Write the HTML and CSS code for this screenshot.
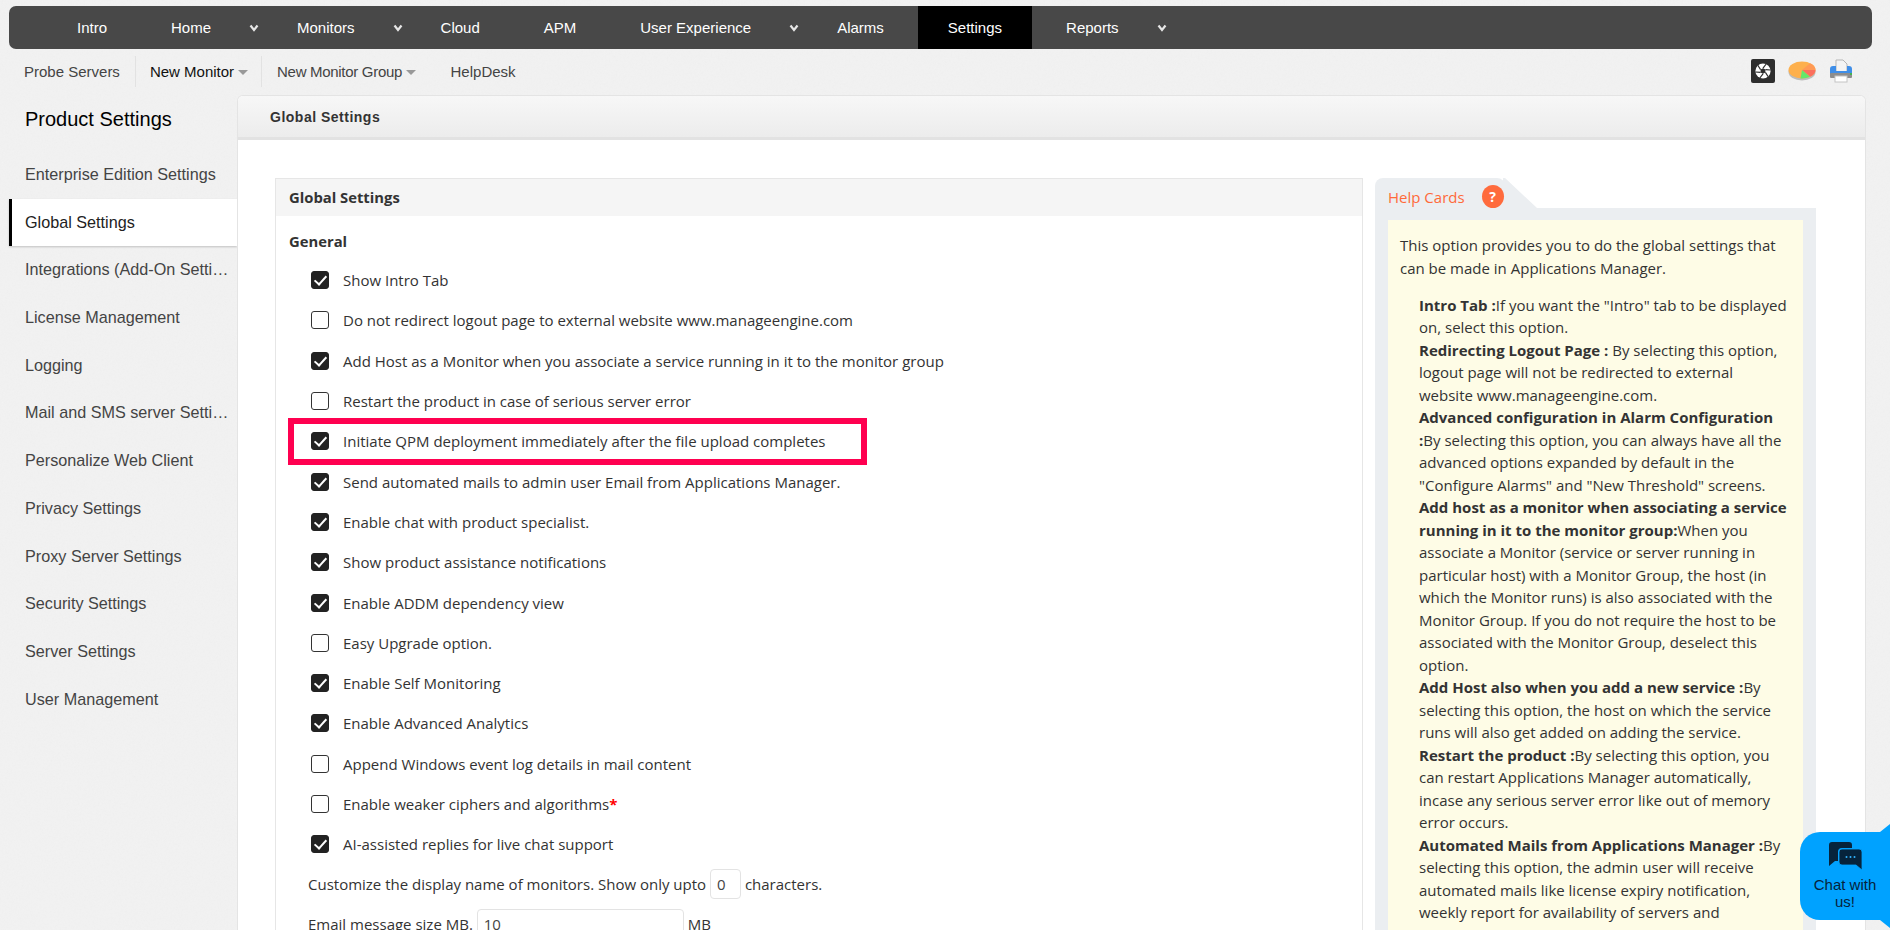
FILE: index.html
```html
<!DOCTYPE html>
<html lang="en">
<head>
<meta charset="utf-8">
<title>Global Settings</title>
<link rel="stylesheet" href="styles.css">
</head>
<body>
<nav class="topnav">
  <a class="tn">Intro</a>
  <a class="tn">Home</a><svg class="chev" viewBox="0 0 10 8"><path d="M1.5 1.5 5 6 8.5 1.5"/></svg>
  <a class="tn">Monitors</a><svg class="chev" viewBox="0 0 10 8"><path d="M1.5 1.5 5 6 8.5 1.5"/></svg>
  <a class="tn">Cloud</a>
  <a class="tn">APM</a>
  <a class="tn">User Experience</a><svg class="chev" viewBox="0 0 10 8"><path d="M1.5 1.5 5 6 8.5 1.5"/></svg>
  <a class="tn">Alarms</a>
  <a class="tn active">Settings</a>
  <a class="tn">Reports</a><svg class="chev" viewBox="0 0 10 8"><path d="M1.5 1.5 5 6 8.5 1.5"/></svg>
</nav>
<div class="subnav">
  <a class="sn first">Probe Servers</a>
  <a class="sn dark sep nm">New Monitor<i class="tri"></i></a>
  <a class="sn sep group">New Monitor Group<i class="tri"></i></a>
  <a class="sn">HelpDesk</a>
  <div class="tools">
    <svg class="ic-shutter" viewBox="0 0 24 24">
      <rect width="24" height="24" rx="2" fill="#2e2e2e"/>
      <circle cx="12" cy="12" r="7.6" fill="#fff"/>
      <path d="M12 9.2 14.4 10.6V13.4L12 14.8 9.6 13.4V10.6Z" fill="#2e2e2e"/>
      <path d="M12 9.2 15.2 5M14.4 10.6 19.6 11M14.4 13.4 17.2 17.8M12 14.8 8.8 19M9.6 13.4 4.4 13M9.6 10.6 6.8 6.2" stroke="#2e2e2e" stroke-width="1.2"/>
    </svg>
    <svg class="ic-pie" viewBox="0 0 28 20">
      <ellipse cx="14" cy="11" rx="13.5" ry="8.5" fill="#bcbcbc"/>
      <ellipse cx="14" cy="9" rx="13.5" ry="8.5" fill="#fdb04d"/>
      <path d="M14 9 27.5 9A13.5 8.5 0 0 0 22 2.2Z" fill="#ff9a55"/>
      <path d="M14 9 27.5 9A13.5 8.5 0 0 1 22 15.8Z" fill="#fb6f5e"/>
      <path d="M14 9 22 15.8A13.5 8.5 0 0 1 12.5 17.4Z" fill="#63e86a"/>
    </svg>
    <svg class="ic-print" viewBox="0 0 24 24">
      <path d="M7 1h7l4 4v9H7z" fill="#f4f4f4" stroke="#b5b5b5"/>
      <path d="M1 10c0-2 1-3 3-3h3v5h11V7h2c2 0 3 1 3 3v6H1z" fill="#3f8ee8"/>
      <rect x="1" y="14" width="22" height="5" rx="1" fill="#8d8d8d"/>
      <rect x="21" y="14" width="2" height="2" fill="#45b24d"/>
      <rect x="6" y="17" width="12" height="6" fill="#fff" stroke="#c4c4c4"/>
    </svg>
  </div>
</div>
<div class="main">
  <aside class="side">
    <h2 class="side-title">Product Settings</h2>
    <a class="si">Enterprise Edition Settings</a>
    <a class="si on">Global Settings</a>
    <a class="si">Integrations (Add-On Settings)</a>
    <a class="si">License Management</a>
    <a class="si">Logging</a>
    <a class="si">Mail and SMS server Settings</a>
    <a class="si">Personalize Web Client</a>
    <a class="si">Privacy Settings</a>
    <a class="si">Proxy Server Settings</a>
    <a class="si">Security Settings</a>
    <a class="si">Server Settings</a>
    <a class="si">User Management</a>
  </aside>
  <section class="panel">
    <header class="panel-head">Global Settings</header>
    <div class="panel-body">
      <div class="box">
        <div class="box-head">Global Settings</div>
        <div class="general">General</div>
        <label class="row"><input type="checkbox" checked>Show Intro Tab</label>
        <label class="row"><input type="checkbox">Do not redirect logout page to external website www.manageengine.com</label>
        <label class="row"><input type="checkbox" checked>Add Host as a Monitor when you associate a service running in it to the monitor group</label>
        <label class="row"><input type="checkbox">Restart the product in case of serious server error</label>
        <label class="row"><input type="checkbox" checked>Initiate QPM deployment immediately after the file upload completes<span class="mark"></span></label>
        <label class="row"><input type="checkbox" checked>Send automated mails to admin user Email from Applications Manager.</label>
        <label class="row"><input type="checkbox" checked>Enable chat with product specialist.</label>
        <label class="row"><input type="checkbox" checked>Show product assistance notifications</label>
        <label class="row"><input type="checkbox" checked>Enable ADDM dependency view</label>
        <label class="row"><input type="checkbox">Easy Upgrade option.</label>
        <label class="row"><input type="checkbox" checked>Enable Self Monitoring</label>
        <label class="row"><input type="checkbox" checked>Enable Advanced Analytics</label>
        <label class="row"><input type="checkbox">Append Windows event log details in mail content</label>
        <label class="row"><input type="checkbox">Enable weaker ciphers and algorithms<b class="req">*</b></label>
        <label class="row"><input type="checkbox" checked>AI-assisted replies for live chat support</label>
        <div class="frow first-f">Customize the display name of monitors. Show only upto <input class="fld short" type="text" value="0"> characters.</div>
        <div class="frow">Email message size MB. <input class="fld long" type="text" value="10"> MB</div>
      </div>
      <div class="help">
        <div class="tab"><span>Help Cards</span><i class="q">?</i></div>
        <div class="card">
          <p class="intro">This option provides you to do the global settings that can be made in Applications Manager.</p>
          <div class="notes">
            <p><b>Intro Tab :</b>If you want the "Intro" tab to be displayed on, select this option.</p>
            <p><b>Redirecting Logout Page : </b>By selecting this option, logout page will not be redirected to external website www.manageengine.com.</p>
            <p><b>Advanced configuration in Alarm Configuration :</b>By selecting this option, you can always have all the advanced options expanded by default in the "Configure Alarms" and "New Threshold" screens.</p>
            <p><b>Add host as a monitor when associating a service running in it to the monitor group:</b>When you associate a Monitor (service or server running in particular host) with a Monitor Group, the host (in which the Monitor runs) is also associated with the Monitor Group. If you do not require the host to be associated with the Monitor Group, deselect this option.</p>
            <p><b>Add Host also when you add a new service :</b>By selecting this option, the host on which the service runs will also get added on adding the service.</p>
            <p><b>Restart the product :</b>By selecting this option, you can restart Applications Manager automatically, incase any serious server error like out of memory error occurs.</p>
            <p><b>Automated Mails from Applications Manager :</b>By selecting this option, the admin user will receive automated mails like license expiry notification, weekly report for availability of servers and applications.</p>
          </div>
        </div>
      </div>
    </div>
  </section>
</div>
<div class="chat">
  <svg class="chat-ic" viewBox="0 0 33 28">
    <path d="M3 0h17a3 3 0 0 1 3 3v3H13a4 4 0 0 0-4 4v9l-3 0-6 5V3a3 3 0 0 1 3-3z" fill="#06233b"/>
    <path d="M13 7h17a3 3 0 0 1 3 3v18l-6-5H13a3 3 0 0 1-3-3V10a3 3 0 0 1 3-3z" fill="#06233b" stroke="#00a2ff" stroke-width=".8"/>
    <circle cx="17.5" cy="15" r="1" fill="#33b5ff"/><circle cx="21.5" cy="15" r="1" fill="#33b5ff"/><circle cx="25.5" cy="15" r="1" fill="#33b5ff"/>
  </svg>
  <div class="chat-t">Chat with us!</div>
</div>
</body>
</html>
```
FILE: styles.css
```css
html, body { margin: 0; height: 930px; overflow: hidden; }
body {
  position: relative;
  background-color: #f3f3f3;
  background-image: url("data:image/svg+xml,%3Csvg xmlns='http://www.w3.org/2000/svg' width='240' height='240'%3E%3Cfilter id='n'%3E%3CfeTurbulence type='fractalNoise' baseFrequency='.55' numOctaves='2'/%3E%3CfeColorMatrix values='0 0 0 0 .5 0 0 0 0 .5 0 0 0 0 .5 0 0 0 .09 0'/%3E%3C/filter%3E%3Crect width='240' height='240' filter='url(%23n)'/%3E%3C/svg%3E");
  font-family: "Open Sans", sans-serif;
  color: #333;
}
p { margin: 0; }

.topnav {
  display: flex; align-items: stretch;
  height: 43px; margin: 6px 18px 0 9px; padding-left: 34px;
  background: #484848; border-radius: 7px;
  font: 15px/43px "Liberation Sans", Arial, sans-serif; color: #fff;
}
.tn { padding: 0 30px; margin-left: 4px; }
.chev + .tn { margin-left: 0; }
.tn.active { background: #000; }
.chev { width: 10px; height: 8px; margin: 18px 8px 0 8px; fill: none; stroke: #e6e6e6; stroke-width: 2.2; }

.subnav {
  display: flex; align-items: center; height: 44px; padding-left: 9px; margin-bottom: 2px;
  font: 15px "Liberation Sans", Arial, sans-serif; color: #444;
}
.sn { display: flex; align-items: center; height: 31px; padding: 0 15px; }
.sn.sep { border-left: 1px solid #e2e2e2; }
.sn.dark { color: #111; }
.sn.nm { padding: 0 13px 0 14px; }
.sn.group { padding-right: 19.5px; letter-spacing: -.3px; }
.tri { width: 0; height: 0; margin: 2px 0 0 4px; border: 5px solid transparent; border-top: 5px solid #999; border-bottom: 0; }
.tools { display: flex; align-items: center; gap: 13px; margin-left: auto; margin-right: 37px; }
.ic-shutter { width: 24px; height: 24px; }
.ic-pie { width: 28px; height: 20px; }
.ic-print { width: 24px; height: 24px; }

.main { display: flex; align-items: flex-start; margin-left: 9px; }
.side { width: 228px; flex: none; font: 16.2px "Liberation Sans", Arial, sans-serif; color: #444; }
.side-title { margin: 0; height: 56px; padding: 12px 0 0 16px; box-sizing: border-box; font: 20px/24px "Liberation Sans", Arial, sans-serif; color: #000; }
.si {
  display: block; height: 47.7px; line-height: 47.7px; padding: 0 8px 0 16px; box-sizing: border-box;
  white-space: nowrap; overflow: hidden; text-overflow: ellipsis;
}
.si.on { background: #fff; border-left: 3px solid #000; padding-left: 13px; color: #222; box-shadow: 0 1px 2px rgba(0,0,0,.2); }

.panel {
  flex: 1; margin-right: 24px; height: 835px; overflow: hidden;
  background: #fff; border: 1px solid #e4e4e4; border-bottom: 0; border-radius: 6px 6px 0 0; box-sizing: border-box;
}
.panel-head {
  height: 41px; padding: 0 32px;
  background: linear-gradient(#f7f7f7, #ececec); border-bottom: 3px solid #e2e2e2;
  font: bold 14px/42px "Liberation Sans", Arial, sans-serif; letter-spacing: .5px; color: #333;
}
.panel-body { display: flex; align-items: flex-start; gap: 12px; padding: 38px 49px 0 37px; }

.box { width: 1088px; flex: none; height: 800px; box-sizing: border-box; border: 1px solid #e6e6e6; border-bottom: 0; font-size: 15px; }
.box-head { height: 37px; padding-left: 13px; background: #f5f5f5; font-weight: 700; line-height: 37px; font-size: 14.8px; color: #333; }
.general { height: 44px; padding-left: 13px; line-height: 51px; font-weight: 700; font-size: 14.8px; }
.row { position: relative; display: flex; align-items: center; height: 40.3px; padding-left: 35px; }
.row input {
  appearance: none; position: relative; width: 18px; height: 18px; margin: 0 14px 0 0; flex: none;
  background: #fff; border: 1px solid #333; border-radius: 3px; box-sizing: border-box;
}
.row input:checked { background: #222; border-color: #222; }
.row input:checked::after {
  content: ""; position: absolute; left: 5px; top: 1px; width: 5px; height: 10px;
  border: solid #fff; border-width: 0 2px 2px 0; transform: rotate(42deg);
}
.mark { position: absolute; left: 12px; top: -3px; width: 579px; height: 47px; box-sizing: border-box; border: 6px solid #ff0050; pointer-events: none; }
.req { color: #f00; }
.frow { display: flex; align-items: center; height: 40.3px; padding-left: 32px; white-space: pre; }
.first-f { margin-top: -1px; }
.fld { box-sizing: border-box; height: 30px; padding: 0 6px; border: 1px solid #e3e3e3; border-radius: 4px; font: 15px "Open Sans", sans-serif; color: #444; background: #fff; }
.short { width: 31px; }
.long { width: 207px; }

.help { width: 441px; flex: none; }
.tab { position: relative; display: flex; align-items: center; width: 130px; height: 30px; padding: 7px 0 0 13px; box-sizing: border-box; background: #ebeef1; border-radius: 8px 8px 0 0; color: #ff6a3a; font-size: 15px; }
.tab::after { content: ""; position: absolute; left: 128px; top: 0; width: 34px; height: 30px; background: #ebeef1; clip-path: polygon(0 0, 6% 0, 100% 100%, 0 100%); }
.q { width: 22px; height: 23px; margin-left: 17px; flex: none; border-radius: 50%; background: #ff6b3d; color: #fff; font: bold 14px/23px "Open Sans", sans-serif; text-align: center; position: relative; z-index: 1; }
.card { background: #ebeef1; padding: 12px 13px 0; }
.intro, .notes { background: #fefce6; }
.intro { padding: 14px 12px 14.5px; line-height: 22.5px; font-size: 15px; }
.notes { padding: 0 15px 14px 31px; line-height: 22.5px; font-size: 15px; }

.chat { position: absolute; left: 1800px; top: 832px; width: 90px; height: 88px; box-sizing: border-box; padding-top: 10px; background: #00a2ff; border-radius: 20px 0 0 20px; text-align: center; color: #06233b; font: 15px/17px "Liberation Sans", Arial, sans-serif; }
.chat::before, .chat::after { content: ""; position: absolute; right: 0; width: 10px; height: 8px; background: #00a2ff; }
.chat::before { top: -8px; clip-path: polygon(100% 0, 100% 100%, 0 100%); }
.chat::after { bottom: -8px; clip-path: polygon(0 0, 100% 0, 100% 100%); }
.chat-ic { display: block; width: 33px; height: 28px; margin: 0 auto 6px; }
.chat-t { width: 76px; margin: 0 auto; }
```
